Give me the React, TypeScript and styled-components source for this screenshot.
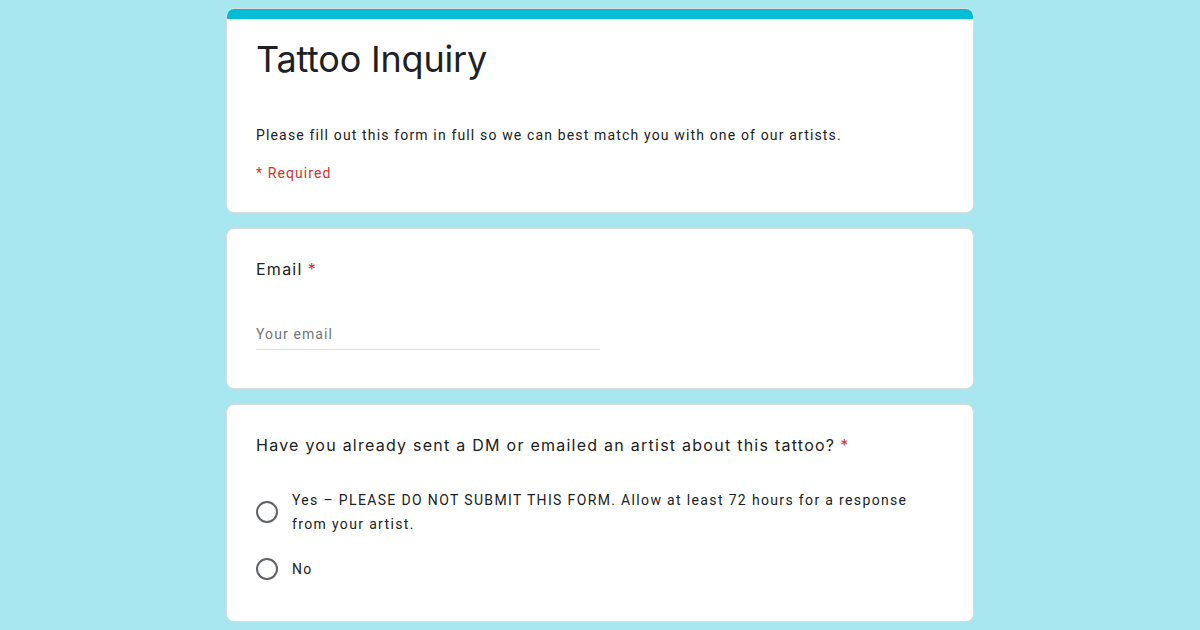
import { createGlobalStyle, styled } from "styled-components";

const GlobalStyle = createGlobalStyle`
  html, body {
    margin: 0;
    padding: 0;
    background-color: #a8e7ef;
    height: 100%;
    overflow: hidden;
  }
  body {
    font-family: Roboto, "Liberation Sans", Arial, sans-serif;
    color: #202124;
  }
`;

const Page = styled.div`
  width: 748px;
  margin: 0 auto;
  padding-top: 8px;
  display: flex;
  flex-direction: column;
  gap: 15px;
`;

const Card = styled.div`
  background-color: #ffffff;
  border: 1px solid #dadce0;
  border-radius: 8px;
  overflow: hidden;
`;

const TopBar = styled.div`
  height: 10px;
  background-color: #00bcd4;
`;

const CardBody = styled.div<{ $top?: number; $bottom?: number }>`
  padding: ${(p) => p.$top ?? 24}px 24px ${(p) => p.$bottom ?? 24}px 29px;
`;

const Title = styled.h1`
  margin: 0;
  font-family: Inter, "Open Sans", sans-serif;
  font-weight: 400;
  font-size: 36px;
  line-height: 48px;
  letter-spacing: -0.2px;
  color: #202124;
`;

const Description = styled.p`
  margin: 42px 0 0;
  font-size: 14px;
  line-height: 20px;
  letter-spacing: 1.15px;
  color: #202124;
`;

const RequiredNote = styled.p`
  margin: 18px 0 0;
  font-size: 14px;
  line-height: 20px;
  letter-spacing: 1.1px;
  color: #d93025;
`;

const Question = styled.div`
  font-family: Inter, "Open Sans", sans-serif;
  font-size: 16px;
  line-height: 24px;
  letter-spacing: 1.25px;
  color: #202124;
`;

const Star = styled.span`
  color: #d93025;
  margin-left: 5px;
`;

const TextInput = styled.input`
  display: block;
  margin-top: 43px;
  width: 344px;
  box-sizing: border-box;
  border: none;
  border-bottom: 1px solid #e0e0e0;
  padding: 0 0 5px;
  font-family: Roboto, "Liberation Sans", sans-serif;
  font-size: 14px;
  line-height: 20px;
  letter-spacing: 1.1px;
  background: transparent;
  outline: none;
  &::placeholder {
    color: #70757a;
  }
`;

const Options = styled.div`
  margin-top: 31px;
  display: flex;
  flex-direction: column;
  gap: 21px;
`;

const Option = styled.label`
  display: flex;
  align-items: center;
  gap: 14px;
  font-size: 14px;
  line-height: 24px;
  letter-spacing: 1.35px;
  color: #202124;
`;

const Radio = styled.span`
  flex: none;
  box-sizing: border-box;
  width: 22px;
  height: 22px;
  border: 2px solid #5f6368;
  border-radius: 50%;
`;

const OptionText = styled.span`
  max-width: 625px;
`;

export default function App() {
  return (
    <>
      <GlobalStyle />
      <Page>
        <Card>
          <TopBar />
          <CardBody $top={16} $bottom={29}>
            <Title>Tattoo Inquiry</Title>
            <Description>
              Please fill out this form in full so we can best match you with
              one of our artists.
            </Description>
            <RequiredNote>* Required</RequiredNote>
          </CardBody>
        </Card>
        <Card>
          <CardBody $top={28} $bottom={38}>
            <Question>
              Email<Star>*</Star>
            </Question>
            <TextInput type="email" placeholder="Your email" />
          </CardBody>
        </Card>
        <Card>
          <CardBody $top={28} $bottom={40}>
            <Question>
              Have you already sent a DM or emailed an artist about this
              tattoo?<Star>*</Star>
            </Question>
            <Options>
              <Option>
                <Radio />
                <OptionText>
                  Yes – PLEASE DO NOT SUBMIT THIS FORM. Allow at least 72 hours
                  for a response from your artist.
                </OptionText>
              </Option>
              <Option>
                <Radio />
                <OptionText>No</OptionText>
              </Option>
            </Options>
          </CardBody>
        </Card>
      </Page>
    </>
  );
}
